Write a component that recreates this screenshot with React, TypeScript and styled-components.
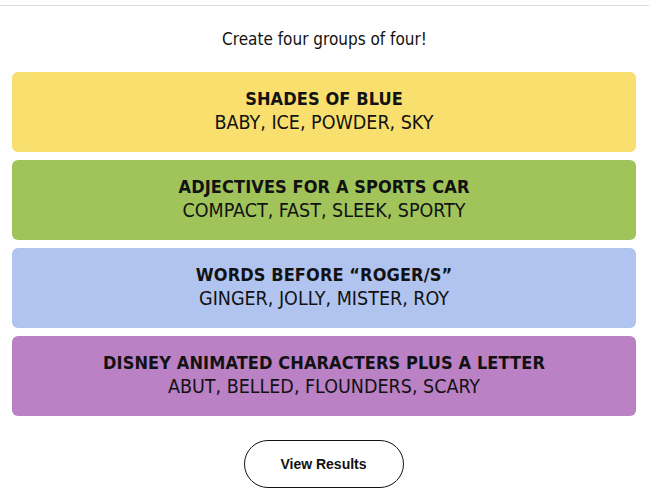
import { createGlobalStyle } from "styled-components";
import styled from "styled-components";

const GROUPS = [
  { title: "SHADES OF BLUE", words: "BABY, ICE, POWDER, SKY", color: "#f9df6d" },
  { title: "ADJECTIVES FOR A SPORTS CAR", words: "COMPACT, FAST, SLEEK, SPORTY", color: "#a0c35a" },
  { title: "WORDS BEFORE \u201CROGER/S\u201D", words: "GINGER, JOLLY, MISTER, ROY", color: "#b0c4ef" },
  { title: "DISNEY ANIMATED CHARACTERS PLUS A LETTER", words: "ABUT, BELLED, FLOUNDERS, SCARY", color: "#ba81c5" },
];

const GlobalStyle = createGlobalStyle`
  body {
    margin: 0;
    background: #ffffff;
    font-family: "DejaVu Sans Condensed", "Liberation Sans", sans-serif;
    color: #000000;
  }
`;

const App = function App() {
  return (
    <>
      <GlobalStyle />
      <Style.Page>
        <Style.TopRule />
        <Style.Prompt>Create four groups of four!</Style.Prompt>
        <Style.Board>
          {GROUPS.map((group) => (
            <Style.Card key={group.title} $color={group.color}>
              <Style.Title>{group.title}</Style.Title>
              <Style.Words>{group.words}</Style.Words>
            </Style.Card>
          ))}
        </Style.Board>
        <Style.Controls>
          <Style.ResultsButton>View Results</Style.ResultsButton>
        </Style.Controls>
      </Style.Page>
    </>
  );
};

export default App;

const Style = {
  Page: styled.main`
    width: 649px;
    display: flex;
    flex-direction: column;
  `,
  TopRule: styled.div`
    height: 5px;
    border-bottom: 1px solid #dcdcdc;
  `,
  Prompt: styled.p`
    margin: 0;
    padding-top: 24px;
    height: 42px;
    box-sizing: border-box;
    text-align: center;
    font-size: 17px;
    line-height: 18px;
    color: #121212;
  `,
  Board: styled.div`
    display: flex;
    flex-direction: column;
    gap: 8px;
    padding: 24px 13px 0 12px;
  `,
  Card: styled.div<{ $color: string }>`
    height: 80px;
    box-sizing: border-box;
    padding-bottom: 3px;
    border-radius: 6px;
    background: ${(p) => p.$color};
    display: flex;
    flex-direction: column;
    align-items: center;
    justify-content: center;
    color: #121212;
  `,
  Title: styled.div`
    font-weight: 700;
    font-size: 18px;
    letter-spacing: 0.1px;
    line-height: 24px;
  `,
  Words: styled.div`
    font-size: 19.5px;
    line-height: 24px;
  `,
  Controls: styled.div`
    display: flex;
    justify-content: center;
    padding-top: 24px;
    padding-right: 2px;
  `,
  ResultsButton: styled.button`
    width: 160px;
    height: 48px;
    border: 1px solid #121212;
    border-radius: 24px;
    background: #ffffff;
    font-family: "Liberation Sans", sans-serif;
    font-weight: 600;
    font-size: 14px;
    color: #121212;
  `,
};
